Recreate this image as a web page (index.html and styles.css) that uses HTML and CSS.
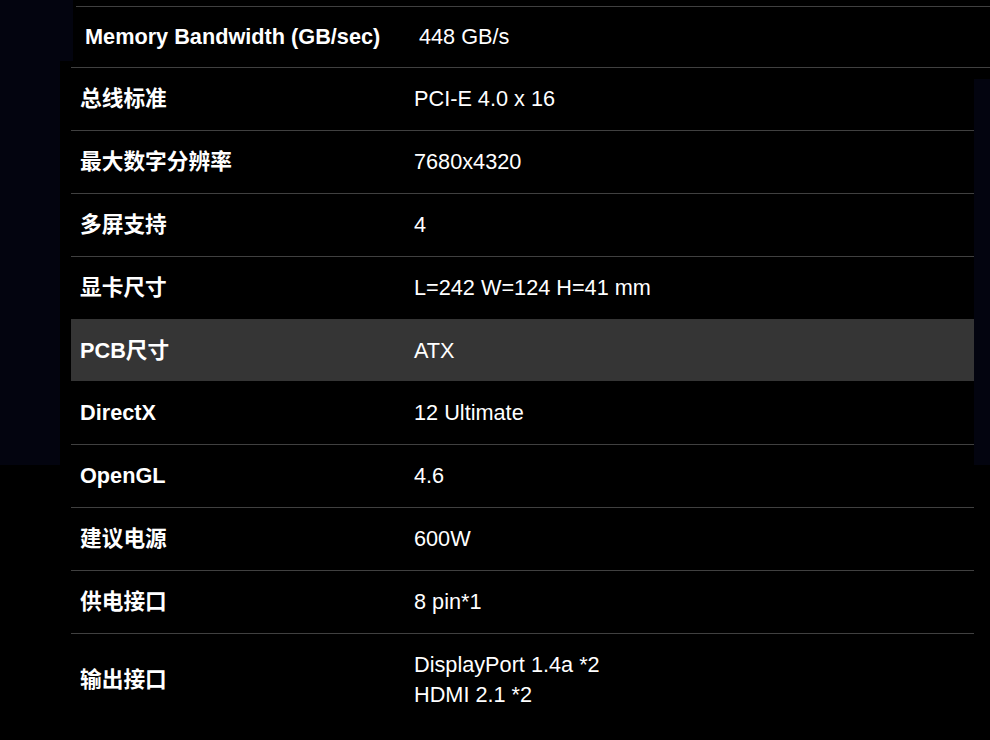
FILE: index.html
```html
<!DOCTYPE html>
<html lang="zh-CN">
<head>
<meta charset="utf-8">
<title>规格参数</title>
<link rel="stylesheet" href="styles.css">
</head>
<body>
  <div class="top-panel">
    <table class="spec spec-top">
      <colgroup><col class="col-label"><col></colgroup>
      <tr><td class="label">Memory Bandwidth (GB/sec)</td><td class="value">448 GB/s</td></tr>
    </table>
  </div>
  <div class="main-panel">
    <table class="spec">
      <colgroup><col class="col-label"><col></colgroup>
      <tr><td class="label">总线标准</td><td class="value">PCI-E 4.0 x 16</td></tr>
      <tr><td class="label">最大数字分辨率</td><td class="value">7680x4320</td></tr>
      <tr><td class="label">多屏支持</td><td class="value">4</td></tr>
      <tr><td class="label">显卡尺寸</td><td class="value">L=242 W=124 H=41 mm</td></tr>
      <tr class="hover"><td class="label">PCB尺寸</td><td class="value">ATX</td></tr>
      <tr><td class="label">DirectX</td><td class="value">12 Ultimate</td></tr>
      <tr><td class="label">OpenGL</td><td class="value">4.6</td></tr>
      <tr><td class="label">建议电源</td><td class="value">600W</td></tr>
      <tr><td class="label">供电接口</td><td class="value">8 pin*1</td></tr>
      <tr><td class="label">输出接口</td><td class="value">DisplayPort 1.4a *2<br>HDMI 2.1 *2</td></tr>
    </table>
  </div>
</body>
</html>
```

FILE: styles.css
```css
html, body {
  margin: 0;
  padding: 0;
}

body {
  min-height: 740px;
  background: linear-gradient(to bottom, #03040f 0, #03040f 465px, #000 465px, #000 100%);
  color: #fff;
  font-family: "Liberation Sans", Arial, "Noto Sans CJK SC", sans-serif;
  font-size: 21.7px;
  line-height: 30px;
  overflow: hidden;
}

.top-panel {
  margin-left: 73px;
  height: 79px;
  padding: 6px 0 0 3px;
  box-sizing: border-box;
  background: #000;
}

.main-panel {
  position: relative;
  margin-left: 60px;
  margin-top: -18px;
  width: 914px;
  min-height: 679px;
  padding: 6px 0 0 11px;
  box-sizing: border-box;
  background: #000;
}

.spec {
  width: 100%;
  border-collapse: collapse;
  table-layout: fixed;
}

.col-label {
  width: 334px;
}

.spec td {
  padding: 16px 9px 15.9px;
  border-top: 1px solid #404040;
  vertical-align: middle;
  white-space: nowrap;
}

.spec-top td {
  padding: 15px 9px;
  border-bottom: 1px solid #404040;
}

.label {
  font-weight: bold;
}

.spec tr.hover td {
  background: #353535;
  border-top-color: #353535;
}

.spec tr.hover + tr td {
  border-top-color: #000;
}
```
